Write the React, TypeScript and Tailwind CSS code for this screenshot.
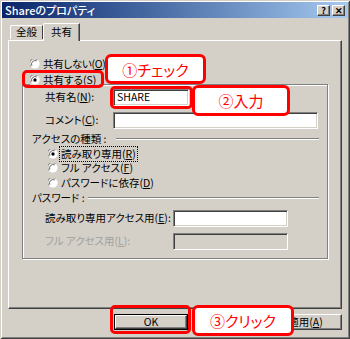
import React from "react";

const F = { fontFamily: '"Noto Sans CJK JP", "Noto Sans", sans-serif' };

function Radio({ checked }: { checked?: boolean }) {
  return (
    <svg width="10" height="10" viewBox="0 0 12 12" className="shrink-0">
      <circle cx="6" cy="6" r="5.5" fill="#fff" />
      <path d="M1.1 9 A5.5 5.5 0 0 1 9 1.1" fill="none" stroke="#808080" strokeWidth="1" />
      <path d="M2.2 8 A4.4 4.4 0 0 1 8 2.2" fill="none" stroke="#404040" strokeWidth="1" />
      <path d="M9 1.1 A5.5 5.5 0 0 1 1.1 9" fill="none" stroke="#ffffff" strokeWidth="1" />
      {checked && <circle cx="6" cy="6" r="2" fill="#000" />}
    </svg>
  );
}

const sunken =
  "border border-t-[#808080] border-l-[#808080] border-r-white border-b-white shadow-[inset_1px_1px_0_#404040,inset_-1px_-1px_0_#d4d0c8]";
const raised =
  "border border-t-white border-l-white border-r-[#404040] border-b-[#404040] shadow-[inset_-1px_-1px_0_#808080]";

function Callout({ text, className }: { text: string; className: string }) {
  return (
    <div
      className={
        "absolute bg-white border-[3px] border-[#ff0000] rounded-[6px] flex items-center justify-center text-[15px] text-[#ff0000] whitespace-nowrap " +
        className
      }
      style={F}
    >
      {text}
    </div>
  );
}

function RedBox({ className }: { className: string }) {
  return <div className={"absolute border-[3px] border-[#ff0000] rounded-[5px] " + className} />;
}

export default function App() {
  return (
    <div
      className="relative w-[350px] h-[339px] bg-[#d4d0c8] overflow-hidden text-[10.5px] text-black leading-none whitespace-nowrap [font-feature-settings:'palt'] shadow-[inset_1px_1px_0_#d4d0c8,inset_-1px_-1px_0_#404040,inset_2px_2px_0_#ffffff,inset_-2px_-2px_0_#808080]"
      style={F}
    >
      {/* title bar */}
      <div className="mx-[2px] pt-[2px]">
        <div className="h-[16px] flex items-center bg-gradient-to-r from-[#0a246a] to-[#a6caf0] pl-[3px] pr-[3px]">
          <span className="text-white text-[11px] font-medium">Shareのプロパティ</span>
          <div className="ml-auto flex gap-[2px]">
            <div className={"w-[13px] h-[11px] bg-[#d4d0c8] flex items-center justify-center text-[9px] font-bold " + raised}>?</div>
            <div className={"w-[13px] h-[11px] bg-[#d4d0c8] flex items-center justify-center text-[9px] font-bold " + raised}>✕</div>
          </div>
        </div>
      </div>

      {/* tabs */}
      <div className="ml-[8px] h-[22px] flex items-end">
        <div className="ml-[2px] w-[33px] h-[14px] border-t border-l border-white border-r border-r-[#404040] rounded-tl-[2px] flex items-center justify-center mb-[1px]">
          全般
        </div>
        <div className="relative z-10 w-[37px] h-[18px] -mb-px bg-[#d4d0c8] border-t border-l border-white border-r border-r-[#404040] shadow-[inset_-1px_0_0_#808080] rounded-tl-[2px] flex items-start justify-center pt-[3px]">
          共有
        </div>
      </div>

      {/* panel */}
      <div className="ml-[8px] w-[334px] h-[269px] border border-t-white border-l-white border-r-[#404040] border-b-[#404040] shadow-[inset_-1px_-1px_0_#808080]">
        <div className="mt-[16px] pl-[21px] h-[14px] flex items-center gap-[3px]">
          <Radio />
          <span className="tracking-[-0.3px]">共有しない(<u>O</u>)</span>
        </div>

        <div className="ml-[13px] mt-[13px] w-[306px] h-[175px] border border-[#808080] shadow-[1px_1px_0_#fff,inset_1px_1px_0_#fff]">
          <div className="-mt-[12px] ml-[7px] w-fit h-[14px] bg-[#d4d0c8] pr-[3px] flex items-center gap-[3px]">
            <Radio checked />
            <span>共有する(<u>S</u>)</span>
          </div>

          <div className="mt-[2px] ml-[22px] h-[17px] flex items-center">
            <span className="w-[68px]">共有名(<u>N</u>):</span>
            <div className={"w-[76px] h-[17px] bg-white flex items-center pl-[3px] " + sunken}>SHARE</div>
          </div>

          <div className="mt-[6px] ml-[22px] h-[17px] flex items-center">
            <span className="w-[68px]">コメント(<u>C</u>):</span>
            <div className={"w-[205px] h-[17px] bg-white " + sunken} />
          </div>

          <div className="mt-[4px] ml-[9px] h-[12px] flex items-center">
            <span className="w-[84px]">アクセスの種類 :</span>
            <div className="w-[203px] h-[2px] border-t border-[#808080] border-b border-b-white" />
          </div>

          <div className="mt-[2px] ml-[25px] h-[14px] flex items-center gap-[2px]">
            <Radio checked />
            <span className="outline-1 outline-dotted outline-black px-[1px] py-[2px]">読み取り専用(<u>R</u>)</span>
          </div>
          <div className="ml-[25px] h-[14px] flex items-center gap-[3px]">
            <Radio />
            <span>フル アクセス(<u>F</u>)</span>
          </div>
          <div className="mt-[1px] ml-[25px] h-[14px] flex items-center gap-[3px]">
            <Radio />
            <span>パスワードに依存(<u>D</u>)</span>
          </div>

          <div className="mt-[2px] ml-[9px] h-[12px] flex items-center">
            <span className="w-[56px]">パスワード :</span>
            <div className="w-[231px] h-[2px] border-t border-[#808080] border-b border-b-white" />
          </div>

          <div className="mt-[6px] ml-[22px] h-[16px] flex items-center">
            <span className="w-[128px]">読み取り専用アクセス用(<u>E</u>):</span>
            <div className={"w-[115px] h-[17px] bg-white " + sunken} />
          </div>

          <div className="mt-[7px] ml-[22px] h-[17px] flex items-center">
            <span className="w-[128px] text-[#a0a0a0]">フル アクセス用(<u>L</u>):</span>
            <div className={"w-[115px] h-[17px] bg-[#d4d0c8] " + sunken} />
          </div>
        </div>
      </div>

      {/* buttons */}
      <div className="mt-[5px] pr-[8px] flex justify-end gap-[4px]">
        <div className="w-[74px] h-[16px] border border-black">
          <div className={"w-full h-full flex items-center justify-center " + raised}>OK</div>
        </div>
        <div className={"w-[73px] h-[16px] " + raised} />
        <div className={"w-[73px] h-[16px] flex items-center justify-center " + raised}>適用(<u>A</u>)</div>
      </div>

      {/* annotations */}
      <RedBox className="left-[22px] top-[70px] w-[82px] h-[18px]" />
      <Callout text="①チェック" className="left-[105px] top-[54px] w-[101px] h-[30px]" />
      <RedBox className="left-[110px] top-[86px] w-[83px] h-[23px]" />
      <Callout text="②入力" className="left-[192px] top-[85px] w-[98px] h-[31px]" />
      <RedBox className="left-[110px] top-[305px] w-[81px] h-[29px]" />
      <Callout text="③クリック" className="left-[192px] top-[305px] w-[102px] h-[31px]" />
    </div>
  );
}
